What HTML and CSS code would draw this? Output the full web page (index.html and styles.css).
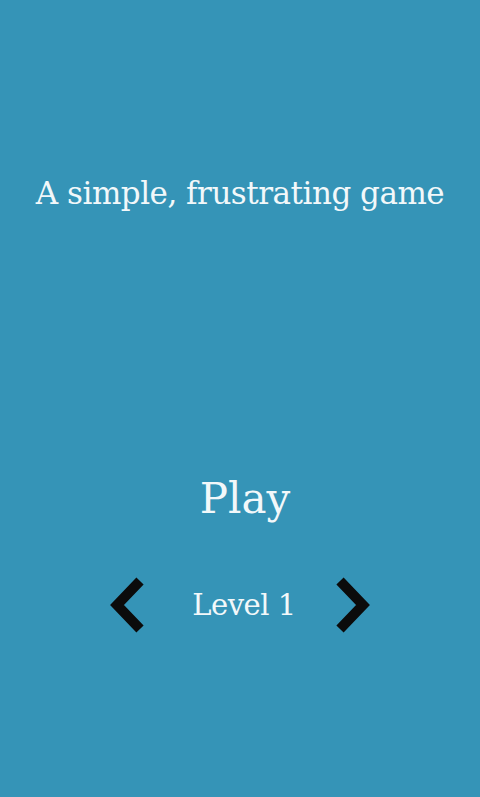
FILE: index.html
```html
<!DOCTYPE html>
<html>
<head>
<meta charset="utf-8">
<link rel="stylesheet" href="styles.css">
</head>
<body>
<div class="screen">
  <h1 class="title">A simple, frustrating game</h1>
  <div class="play">Play</div>
  <div class="level-row">
    <svg class="chev" viewBox="0 0 40 58" width="40" height="58"><path d="M32 5 L9 29 L32 53" fill="none" stroke="#0b0b0b" stroke-width="10" stroke-linejoin="miter"/></svg>
    <div class="level">Level 1</div>
    <svg class="chev" viewBox="0 0 40 58" width="40" height="58"><path d="M8 5 L31 29 L8 53" fill="none" stroke="#0b0b0b" stroke-width="10" stroke-linejoin="miter"/></svg>
  </div>
</div>
</body>
</html>
```
FILE: styles.css
```css
html, body { margin: 0; padding: 0; }
body { background: #3594b7; }
.screen {
  width: 480px;
  height: 797px;
  display: flex;
  flex-direction: column;
  align-items: center;
  color: #f2f8fa;
  font-family: "DejaVu Serif", serif;
}
.title {
  margin: 172px 0 0 0;
  font-weight: normal;
  font-size: 31px;
  line-height: 42px;
  letter-spacing: -0.5px;
  white-space: nowrap;
}
.play {
  margin-top: 258px;
  padding-left: 10px;
  font-size: 42px;
  line-height: 54px;
}
.level-row {
  margin-top: 50px;
  display: flex;
  align-items: center;
}
.level {
  margin: 0 36px 0 44px;
  font-size: 29px;
  line-height: 40px;
  letter-spacing: -0.5px;
}
```
